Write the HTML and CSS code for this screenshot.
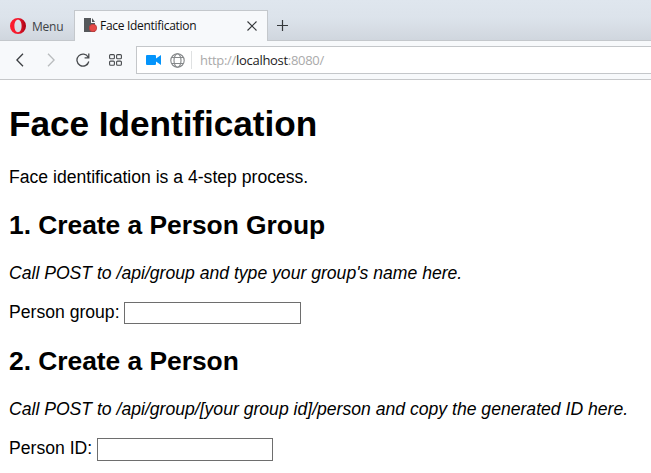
FILE: index.html
```html
<!DOCTYPE html>
<html lang="en">
<head>
<meta charset="utf-8">
<title>Face Identification</title>
<link rel="stylesheet" href="styles.css">
</head>
<body>
<header class="browser">
  <div class="tabs">
    <div class="menu">
      <svg width="16" height="16" viewBox="0 0 16 16"><defs><linearGradient id="red" x2="1"><stop offset="0" stop-color="#ff1b2d"/><stop offset=".5" stop-color="#f31b2e"/><stop offset="1" stop-color="#a70014"/></linearGradient></defs><path fill="url(#red)" fill-rule="evenodd" d="M8 0a8 8 0 1 0 0 16A8 8 0 1 0 8 0ZM8 1.800c2.200 0 3.600 2.700 3.600 6.200S10.200 14.200 8 14.200 4.400 11.500 4.400 8 5.800 1.800 8 1.800Z"/></svg>
      <span class="menu-label">Menu</span>
    </div>
    <div class="tab">
      <svg width="14" height="15" viewBox="0 0 14 15"><path fill="#55585b" d="M0 0h7v5h4v9H0zM8 0l3 4H8z"/><circle cx="9" cy="10" r="3.700" fill="#e64b48" stroke="#bd3938" stroke-width=".8"/></svg>
      <span class="tab-title">Face Identification</span>
      <svg class="close" width="10" height="10" viewBox="0 0 10 10"><path d="m.5.5 9 9m0-9-9 9" fill="none" stroke="#35383b" stroke-width="1.100"/></svg>
    </div>
    <svg class="plus" width="11" height="11" viewBox="0 0 11 11"><path d="M5.500 0v11M0 5.500h11" stroke="#35383b" stroke-width="1.200"/></svg>
  </div>
  <div class="toolbar">
    <svg class="back" width="8" height="14" viewBox="0 0 8 14"><path d="M7 .8.900 7 7 13.200" fill="none" stroke="#3c3f42" stroke-width="1.300"/></svg>
    <svg class="forward" width="8" height="14" viewBox="0 0 8 14"><path d="M1 .8 7.100 7 1 13.200" fill="none" stroke="#b9bcbe" stroke-width="1.300"/></svg>
    <svg class="reload" width="14" height="14" viewBox="0 0 14 14"><path d="M12.200 4.200A6 6 0 1 0 12.800 8.500M12.800.5v4.300H8.600" fill="none" stroke="#484b4e" stroke-width="1.300"/></svg>
    <svg class="dial" width="13" height="12" viewBox="0 0 13 12"><g fill="none" stroke="#484b4e" stroke-width="1.100"><rect x=".6" y=".6" width="4.800" height="4.200" rx="1"/><rect x="7.600" y=".6" width="4.800" height="4.200" rx="1"/><rect x=".6" y="7.100" width="4.800" height="4.200" rx="1"/><rect x="7.600" y="7.100" width="4.800" height="4.200" rx="1"/></g></svg>
    <div class="address">
      <svg class="camera" width="15" height="10" viewBox="0 0 15 10"><path fill="#0494fb" d="M1 0h8q1 0 1 1v2.500L15 0v10l-5-3.500V9q0 1-1 1H1Q0 10 0 9V1Q0 0 1 0Z"/></svg>
      <svg class="globe" width="15" height="15" viewBox="0 0 15 15"><g fill="none" stroke="#85888a" stroke-width="1.100"><circle cx="7.500" cy="7.500" r="6.700"/><ellipse cx="7.500" cy="7.500" rx="3.500" ry="6.700"/><path d="M1.700 4.500h11.600M1.700 10.500h11.600"/></g></svg>
      <span class="divider"></span>
      <span class="url">http://<b>localhost</b>:8080/</span>
    </div>
  </div>
</header>
<main>
  <h1>Face Identification</h1>
  <p>Face identification is a 4-step process.</p>
  <h2>1. Create a Person Group</h2>
  <p><em>Call POST to /api/group and type your group's name here.</em></p>
  <div class="field"><label for="group">Person group:</label><input id="group" type="text"></div>
  <h2 class="second">2. Create a Person</h2>
  <p><em>Call POST to /api/group/[your group id]/person and copy the generated ID here.</em></p>
  <div class="field field-id"><label for="person">Person ID:</label><input id="person" type="text"></div>
</main>
</body>
</html>
```
FILE: styles.css
```css
* { box-sizing: border-box; }
body { margin: 0; min-height: 473px; background: #fff; color: #000; overflow: hidden; font: 17.6px/20px "Liberation Sans", Arial, sans-serif; }
svg { display: block; flex: none; }
.browser { height: 80px; border-bottom: 1px solid #c6c8ca; background: #f7f9fb; font-family: "Open Sans", "Segoe UI", sans-serif; }
.tabs { display: flex; height: 41px; background: linear-gradient(#dfe6ee 0, #dce3eb 45%, #d0d6de 100%); border-bottom: 1px solid #c4c8cc; }
.menu { display: flex; width: 74px; padding: 18px 0 0 10px; }
.menu-label { margin: -1px 0 0 6px; font-size: 12px; line-height: 20px; letter-spacing: -.25px; color: #3d4246; white-space: nowrap; }
.tab { display: flex; width: 194px; height: 31px; margin-top: 10px; padding: 7px 0 0 9px; background: #f7f9fb; border: 1px solid #c4c8cc; border-bottom: 0; }
.tab-title { width: 150px; margin: -1px 0 0 2px; font-size: 12px; line-height: 18px; letter-spacing: -.3px; white-space: nowrap; color: #111; }
.close { margin: 3px 0 0 -3px; }
.plus { margin: 20px 0 0 9px; }
.toolbar { display: flex; height: 38px; align-items: center; padding-left: 16px; }
.forward { margin-left: 23px; }
.reload { margin-left: 21px; }
.dial { margin-left: 19px; }
.address { display: flex; align-items: center; flex: 1; height: 28px; margin-left: 14px; padding-left: 9px; background: #fff; border: 1px solid #c4c7ca; border-right: 0; }
.globe { margin-left: 9px; }
.divider { width: 1px; height: 18px; margin-left: 6px; background: #dfe1e2; }
.url { margin-left: 8px; font-size: 13px; line-height: 18px; color: #aaa; white-space: nowrap; letter-spacing: -.3px; }
.url b { font-weight: 400; color: #222; }
main { padding: 24px 9px 0; white-space: nowrap; }
h1 { margin: 0 0 23px; font-size: 35.2px; line-height: 40px; letter-spacing: -.04px; }
h2 { margin: 23px 0; font-size: 26.4px; line-height: 30px; letter-spacing: -.03px; }
.second { margin-top: 22px; }
p { margin: 0; }
.field { display: flex; height: 22px; margin-top: 19px; }
.field input { width: 177px; height: 22px; margin: 0 0 0 4px; padding: 1px; border: 1px solid #6e6e6e; background: #fff; }
.field-id input { width: 176px; height: 23px; margin-left: 5px; }
```
